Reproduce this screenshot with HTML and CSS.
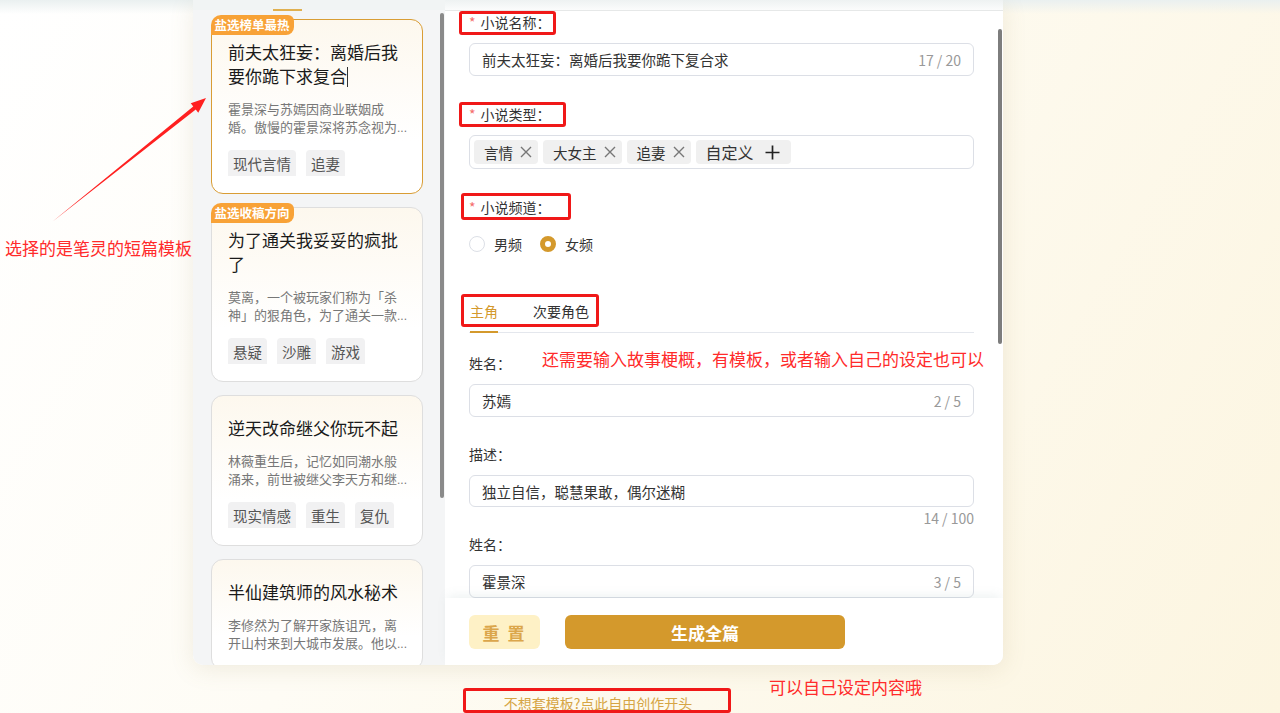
FILE: index.html
```html
<!DOCTYPE html>
<html lang="zh-CN">
<head>
    <meta charset="UTF-8">
    <meta name="viewport" content="width=device-width, initial-scale=1.0">
    <title>短篇模板</title>
    <link rel="stylesheet" href="styles.css">
</head>
<body>
    <div class="stage">
        <div class="panel">
            <div class="side">
                <div class="side-head"><span class="side-tab"></span></div>
                <div class="card-list">
                    <div class="card active">
                        <span class="badge">盐选榜单最热</span>
                        <h3 class="card-title">前夫太狂妄：离婚后我要你跪下求复合<span class="caret"></span></h3>
                        <p class="card-desc">霍景深与苏嫣因商业联姻成婚。傲慢的霍景深将苏念视为<span class="more">...</span></p>
                        <div class="card-tags"><span>现代言情</span><span>追妻</span></div>
                    </div>
                    <div class="card">
                        <span class="badge">盐选收稿方向</span>
                        <h3 class="card-title">为了通关我妥妥的疯批了</h3>
                        <p class="card-desc">莫离，一个被玩家们称为「杀神」的狠角色，为了通关一款<span class="more">...</span></p>
                        <div class="card-tags"><span>悬疑</span><span>沙雕</span><span>游戏</span></div>
                    </div>
                    <div class="card">
                        <h3 class="card-title">逆天改命继父你玩不起</h3>
                        <p class="card-desc">林薇重生后，记忆如同潮水般涌来，前世被继父李天方和继<span class="more">...</span></p>
                        <div class="card-tags"><span>现实情感</span><span>重生</span><span>复仇</span></div>
                    </div>
                    <div class="card">
                        <h3 class="card-title">半仙建筑师的风水秘术</h3>
                        <p class="card-desc">李修然为了解开家族诅咒，离开山村来到大城市发展。他以<span class="more">...</span></p>
                    </div>
                </div>
                <div class="side-scroll"></div>
            </div>

            <div class="main">
                <div class="main-head"></div>
                <div class="form">
                    <div class="item">
                        <div class="label"><i>*</i>小说名称：</div>
                        <div class="input">
                            <span>前夫太狂妄：离婚后我要你跪下复合求</span>
                            <span class="count">17 / 20</span>
                        </div>
                    </div>
                    <div class="item">
                        <div class="label"><i>*</i>小说类型：</div>
                        <div class="input tag-input">
                            <span class="chip">言情
                                <svg viewBox="0 0 14 14"><path d="M2 2 L12 12 M12 2 L2 12"/></svg>
                            </span>
                            <span class="chip">大女主
                                <svg viewBox="0 0 14 14"><path d="M2 2 L12 12 M12 2 L2 12"/></svg>
                            </span>
                            <span class="chip">追妻
                                <svg viewBox="0 0 14 14"><path d="M2 2 L12 12 M12 2 L2 12"/></svg>
                            </span>
                            <span class="chip chip-add">自定义
                                <svg viewBox="0 0 15 15"><path d="M7.5 0.5 V14.5 M0.5 7.5 H14.5"/></svg>
                            </span>
                        </div>
                    </div>
                    <div class="item">
                        <div class="label"><i>*</i>小说频道：</div>
                        <div class="radios">
                            <label class="radio"><span class="dot"></span>男频</label>
                            <label class="radio checked"><span class="dot"></span>女频</label>
                        </div>
                    </div>

                    <div class="tabs">
                        <span class="tab active">主角</span>
                        <span class="tab">次要角色</span>
                    </div>

                    <div class="char">
                        <div class="item">
                            <div class="label">姓名：</div>
                            <div class="input">
                                <span>苏嫣</span>
                                <span class="count">2 / 5</span>
                            </div>
                        </div>
                        <div class="item item-desc">
                            <div class="label">描述：</div>
                            <div class="input input-desc">
                                <span>独立自信，聪慧果敢，偶尔迷糊</span>
                            </div>
                            <div class="count-below">14 / 100</div>
                        </div>
                        <div class="item">
                            <div class="label">姓名：</div>
                            <div class="input">
                                <span>霍景深</span>
                                <span class="count">3 / 5</span>
                            </div>
                        </div>
                    </div>
                </div>
                <div class="footer">
                    <button class="btn btn-reset">重 置</button>
                    <button class="btn btn-go">生成全篇</button>
                </div>
                <div class="main-scroll"></div>
            </div>
        </div>
        <div class="free-link">不想套模板?点此自由创作开头</div>
    </div>

    <!-- annotations drawn over the screenshot -->
    <svg class="note-arrow" viewBox="0 0 175 140">
        <polygon points="12,132 155.75,19.56 158.25,22.7 166,8 150.75,13.3 153.25,16.44"/>
    </svg>
    <div class="note note-left">选择的是笔灵的短篇模板</div>
    <div class="note note-mid">还需要输入故事梗概，有模板，或者输入自己的设定也可以</div>
    <div class="note note-bottom">可以自己设定内容哦</div>
    <div class="mark mark-name"></div>
    <div class="mark mark-type"></div>
    <div class="mark mark-channel"></div>
    <div class="mark mark-tabs"></div>
    <div class="mark mark-free"></div>
</body>
</html>
```

FILE: styles.css
```css
body {
    margin: 0;
    height: 713px;
    overflow: hidden;
    position: relative;
    font-family: "Noto Sans CJK SC", "Noto Sans", sans-serif;
    color: #333;
    background:
        linear-gradient(to bottom, #eaf0f0 0, rgba(255, 255, 255, 0) 14px),
        linear-gradient(120deg, #ffffff 0%, #fefcf5 40%, #fcf5e0 100%);
}
.stage {
    width: 810px;
    margin-left: 193px;
}
.panel {
    display: flex;
    height: 665px;
    background: #fff;
    border-radius: 0 0 10px 10px;
    box-shadow: 0 4px 24px rgba(150, 130, 80, 0.14);
    overflow: hidden;
}

/* left template list */
.side {
    width: 252px;
    background: #f4f5f6;
    position: relative;
    flex-shrink: 0;
}
.side-head {
    height: 10px;
    background: #f1f4f4;
    position: relative;
}
.side-tab {
    position: absolute;
    left: 80px;
    bottom: -1px;
    width: 29px;
    height: 2px;
    background: #e0b050;
}
.card-list {
    padding: 9px 0 0 18px;
    display: flex;
    flex-direction: column;
    gap: 13px;
}
.card {
    position: relative;
    width: 212px;
    box-sizing: border-box;
    padding: 20px 14px 17px 16px;
    border: 1.5px solid #dedede;
    border-radius: 12px;
    background: linear-gradient(to bottom, #fdf8ee, #ffffff 70%);
}
.card.active {
    border-color: #d99d35;
}
.badge {
    position: absolute;
    top: -5px;
    left: -1.5px;
    height: 20px;
    line-height: 20px;
    padding: 0 4px;
    font-size: 12.5px;
    font-weight: bold;
    color: #fff;
    background: #f8a237;
    border-radius: 10px 6px 8px 0;
}
.card-title {
    margin: 0;
    font-size: 17px;
    line-height: 24px;
    font-weight: normal;
    color: #1a1a1a;
}
.caret {
    display: inline-block;
    width: 1px;
    height: 20px;
    background: #333;
    vertical-align: -4px;
}
.card-desc {
    margin: 12px 0 0;
    font-size: 13px;
    line-height: 18px;
    height: 36px;
    overflow: hidden;
    color: #777;
}
.more {
    font-family: "Liberation Sans", sans-serif;
    font-size: 12px;
}
.card-tags {
    display: flex;
    gap: 10px;
    margin-top: 14px;
    height: 26px;
    overflow: hidden;
}
.card-tags span {
    padding: 0 5px;
    line-height: 27px;
    font-size: 14.5px;
    color: #555;
    background: #f1f1f2;
    border-radius: 4px 4px 0 0;
}
.side-scroll {
    position: absolute;
    right: 1px;
    top: 13px;
    width: 4px;
    height: 485px;
    border-radius: 2px;
    background: #8a8a8a;
}

/* right form */
.main {
    flex: 1;
    display: flex;
    flex-direction: column;
    position: relative;
}
.main-head {
    height: 10px;
    border-bottom: 1px solid #e6e8e8;
    background: linear-gradient(to bottom, #eef2f2, #fbfcfc);
}
.form {
    flex: 1;
    overflow: hidden;
    padding: 1px 29px 0 24px;
}
.item {
    margin-bottom: 28px;
}
.label {
    height: 20px;
    line-height: 20px;
    font-size: 14px;
    color: #333;
    margin-bottom: 11px;
}
.label i {
    font-style: normal;
    color: #f56c6c;
    margin-right: 5px;
}
.input {
    display: flex;
    align-items: center;
    justify-content: space-between;
    height: 33px;
    box-sizing: border-box;
    padding: 0 12px;
    border: 1px solid #dcdfe6;
    border-radius: 6px;
    font-size: 14.5px;
    color: #333;
}
.count {
    font-size: 14px;
    color: #999;
}
.tag-input {
    height: 34px;
    padding: 0 4px;
    justify-content: flex-start;
    gap: 5px;
}
.chip {
    display: flex;
    align-items: center;
    gap: 6px;
    height: 24px;
    padding: 0 5px 0 10px;
    background: #f0f0f0;
    border-radius: 4px;
    font-size: 14.5px;
    color: #333;
}
.chip svg {
    width: 14px;
    height: 14px;
    stroke: #777;
    stroke-width: 1.4;
    fill: none;
}
.chip-add {
    font-size: 16px;
    gap: 11px;
    padding: 0 11px 0 10px;
}
.chip-add svg {
    width: 15px;
    height: 15px;
    stroke: #222;
    stroke-width: 1.7;
}
.radios {
    display: flex;
    gap: 18px;
    margin-top: 17px;
    height: 20px;
}
.radio {
    display: flex;
    align-items: center;
    gap: 9px;
    font-size: 14px;
    color: #333;
}
.dot {
    width: 16px;
    height: 16px;
    box-sizing: border-box;
    border: 1px solid #dcdfe6;
    border-radius: 50%;
}
.radio.checked .dot {
    border: 5px solid #d4992c;
    background: #fff;
}
.tabs {
    display: flex;
    gap: 35px;
    margin-top: 47px;
    border-bottom: 1px solid #e4e7ed;
    padding-left: 1px;
}
.tab {
    font-size: 14px;
    line-height: 20px;
    padding-bottom: 10px;
    margin-bottom: -1px;
    border-bottom: 2px solid transparent;
    color: #333;
}
.tab.active {
    color: #d4992c;
    border-bottom-color: #d4992c;
}
.char {
    margin-top: 20px;
}
.char .item {
    margin-bottom: 27px;
}
.item-desc {
    margin-bottom: 8px !important;
}
.input-desc {
    height: 32px;
}
.count-below {
    text-align: right;
    font-size: 14px;
    line-height: 16px;
    margin-top: 3px;
    color: #999;
}
.footer {
    height: 67px;
    box-sizing: border-box;
    padding: 17px 0 0 24px;
    display: flex;
    gap: 25px;
    background: #fff;
    box-shadow: 0 -5px 10px -3px rgba(110, 150, 150, 0.13);
    position: relative;
}
.btn {
    height: 34px;
    border: none;
    border-radius: 6px;
    font-family: inherit;
    font-size: 17px;
    font-weight: bold;
}
.btn-reset {
    width: 71px;
    background: #fef1c6;
    color: #dba64b;
    letter-spacing: 2px;
}
.btn-go {
    width: 280px;
    background: #d4992c;
    color: #fff;
}
.main-scroll {
    position: absolute;
    right: 1px;
    top: 29px;
    width: 4px;
    height: 315px;
    border-radius: 2px;
    background: #7d7d7d;
}
.free-link {
    margin-top: 30px;
    text-align: center;
    font-size: 14px;
    line-height: 16px;
    color: #d6a545;
}

/* annotations */
.note-arrow {
    position: absolute;
    left: 40px;
    top: 90px;
    width: 175px;
    height: 140px;
    fill: #ff2020;
}
.note {
    position: absolute;
    font-size: 17px;
    line-height: 22px;
    color: #ff2b2b;
    white-space: nowrap;
}
.note-left { left: 5px; top: 237px; }
.note-mid { left: 542px; top: 348px; }
.note-bottom { left: 769px; top: 676px; }
.mark {
    position: absolute;
    border: 3px solid #f01818;
    border-radius: 3px;
    box-sizing: border-box;
}
.mark-name { left: 459px; top: 11px; width: 97px; height: 24px; }
.mark-type { left: 459px; top: 102px; width: 107px; height: 25px; }
.mark-channel { left: 461px; top: 193px; width: 110px; height: 27px; }
.mark-tabs { left: 461px; top: 294px; width: 138px; height: 33px; }
.mark-free { left: 463px; top: 688px; width: 268px; height: 25px; }
```
